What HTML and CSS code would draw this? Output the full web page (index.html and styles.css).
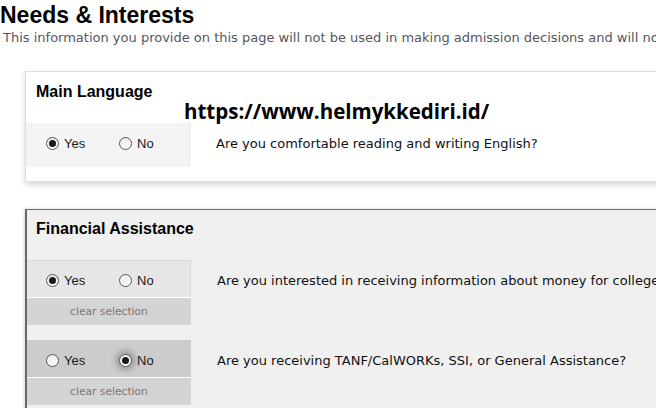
FILE: index.html
```html
<!DOCTYPE html>
<html lang="en">
<head>
<meta charset="utf-8">
<title>Needs &amp; Interests</title>
<link rel="stylesheet" href="styles.css">
</head>
<body>
<header class="page-head">
  <h1 class="page-title">Needs &amp; Interests</h1>
  <p class="page-sub">This information you provide on this page will not be used in making admission decisions and will no</p>
</header>

<main class="sections">
  <section class="card card-plain">
    <h2 class="card-title">Main Language</h2>
    <div class="question">
      <div class="choice-col">
        <div class="choices choices-light">
          <span class="opt"><span class="radio checked"></span><span class="opt-label">Yes</span></span>
          <span class="opt"><span class="radio"></span><span class="opt-label">No</span></span>
        </div>
      </div>
      <div class="prompt prompt-mid">Are you comfortable reading and writing English?</div>
    </div>
  </section>

  <section class="card card-active">
    <h2 class="card-title">Financial Assistance</h2>
    <div class="question">
      <div class="choice-col">
        <div class="choices choices-mid">
          <span class="opt"><span class="radio checked"></span><span class="opt-label">Yes</span></span>
          <span class="opt"><span class="radio"></span><span class="opt-label">No</span></span>
        </div>
        <div class="clear">clear selection</div>
      </div>
      <div class="prompt prompt-top">Are you interested in receiving information about money for college?</div>
    </div>
    <div class="question">
      <div class="choice-col">
        <div class="choices choices-dark">
          <span class="opt"><span class="radio"></span><span class="opt-label">Yes</span></span>
          <span class="opt"><span class="radio checked focus"></span><span class="opt-label">No</span></span>
        </div>
        <div class="clear">clear selection</div>
      </div>
      <div class="prompt prompt-top">Are you receiving TANF/CalWORKs, SSI, or General Assistance?</div>
    </div>
  </section>
</main>

<div class="watermark">https://www.helmykkediri.id/</div>
</body>
</html>
```

FILE: styles.css
```css
html, body {
  margin: 0;
  padding: 0;
  background: #ffffff;
}

body {
  width: 656px;
  height: 408px;
  overflow: hidden;
  position: relative;
  font-family: "DejaVu Sans", Verdana, sans-serif;
}

.page-head {
  padding: 2px 0 0 0;
}

.page-title {
  margin: 0;
  font-family: "Liberation Sans", Arial, sans-serif;
  font-weight: bold;
  font-size: 23px;
  line-height: 26px;
  color: #000;
}

.page-sub {
  margin: 2px 0 0 3px;
  font-size: 13px;
  line-height: 16px;
  color: #555560;
  white-space: nowrap;
  overflow: hidden;
}

.sections {
  padding: 25px 0 0 25px;
  width: 631px;
}

.card {
  box-sizing: border-box;
  width: 700px;
}

.card-plain {
  background: #ffffff;
  border: 1px solid #dddddd;
  padding: 10px 0 14px 0;
  box-shadow: 0 3px 6px rgba(0, 0, 0, 0.16);
}

.card-active {
  margin-top: 27px;
  background: #f0f0f0;
  border: 1px solid #6a6a6a;
  border-left: 2px solid #6a6a6a;
  padding: 9px 0 20px 0;
  box-shadow: 0 1px 4px rgba(0, 0, 0, 0.25);
}

.card-title {
  margin: 0 0 21px 10px;
  font-family: "Liberation Sans", Arial, sans-serif;
  font-weight: bold;
  font-size: 16px;
  line-height: 20px;
  color: #000;
}

.card-active .card-title {
  margin-left: 9px;
}

.question {
  display: flex;
  align-items: stretch;
}

.question + .question {
  margin-top: 15px;
}

.choice-col {
  width: 164px;
  flex: none;
  display: flex;
  flex-direction: column;
}

.choices {
  display: flex;
  align-items: center;
  padding-left: 20px;
  box-sizing: border-box;
}

.choices-light {
  height: 44px;
  padding-bottom: 3px;
  background: #f4f4f4;
  border-right: 1px solid #e8e8e8;
}

.choices-mid {
  height: 37px;
  padding-top: 3px;
  background: #e6e6e6;
  border-top: 1px solid #d8d8d8;
  border-right: 1px solid #d8d8d8;
}

.choices-dark {
  height: 37px;
  padding-top: 3px;
  background: #cccccc;
}

.card-active .choices {
  padding-left: 19px;
}

.opt {
  display: flex;
  align-items: center;
  width: 73px;
  flex: none;
}

.radio {
  box-sizing: border-box;
  width: 13px;
  height: 13px;
  border-radius: 50%;
  border: 1px solid #555;
  background: linear-gradient(#ececec, #ffffff);
  display: flex;
  align-items: center;
  justify-content: center;
  flex: none;
}

.radio.checked::after {
  content: "";
  width: 7px;
  height: 7px;
  border-radius: 50%;
  background: #1a1a1a;
}

.radio.focus {
  box-shadow: 0 0 6px 3px rgba(0, 0, 0, 0.28);
}

.opt-label {
  margin-left: 5px;
  font-family: "Liberation Sans", Arial, sans-serif;
  font-size: 13px;
  color: #1a1a1a;
}

.clear {
  height: 28px;
  box-sizing: border-box;
  border-top: 1px solid #ffffff;
  background: #d4d4d4;
  color: #777777;
  font-size: 10.7px;
  display: flex;
  align-items: center;
  justify-content: center;
}

.prompt {
  padding-left: 26px;
  display: flex;
  font-size: 13px;
  line-height: 15px;
  color: #111111;
  white-space: nowrap;
}

.prompt-mid {
  align-items: center;
  padding-bottom: 3px;
}

.prompt-top {
  align-items: flex-start;
  padding-top: 13px;
}

.watermark {
  position: absolute;
  left: 184px;
  top: 97px;
  font-family: "Open Sans", "Noto Sans", sans-serif;
  font-weight: bold;
  font-size: 20.5px;
  line-height: 29px;
  color: #000;
}
```
